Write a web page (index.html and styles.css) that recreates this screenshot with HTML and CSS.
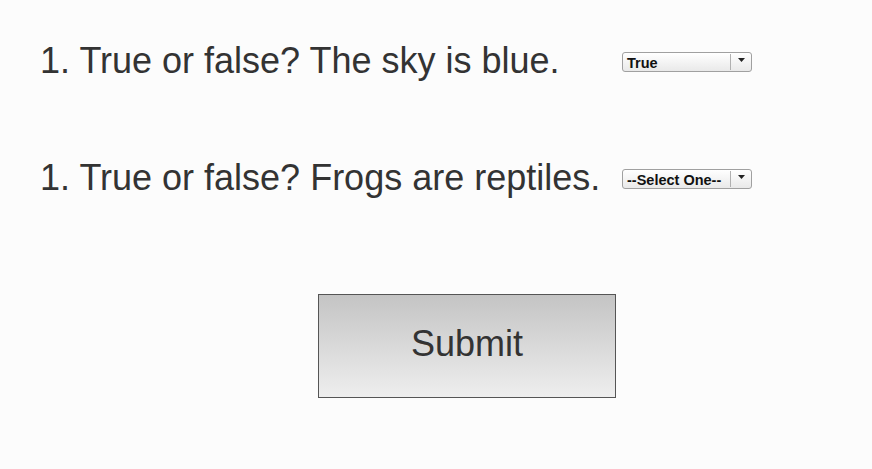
FILE: index.html
```html
<!DOCTYPE html>
<html>
<head>
<meta charset="utf-8">
<link rel="stylesheet" href="styles.css">
</head>
<body>
<div class="quiz">
  <div class="row">
    <div class="q">1. True or false? The sky is blue.</div>
    <div class="sel"><span class="val">True</span><span class="arr"><svg width="7" height="4" viewBox="0 0 7 4"><path d="M0 0H7L3.5 4Z" fill="#222"/></svg></span></div>
  </div>
  <div class="row">
    <div class="q">1. True or false? Frogs are reptiles.</div>
    <div class="sel"><span class="val">--Select One--</span><span class="arr"><svg width="7" height="4" viewBox="0 0 7 4"><path d="M0 0H7L3.5 4Z" fill="#222"/></svg></span></div>
  </div>
  <div class="actions">
    <button class="submit">Submit</button>
  </div>
</div>
</body>
</html>
```
FILE: styles.css
```css
html, body {
  margin: 0;
  padding: 0;
  background: #fcfcfc;
}
body {
  font-family: "Liberation Sans", Arial, sans-serif;
  color: #333;
  width: 872px;
  height: 469px;
  overflow: hidden;
}
.quiz {
  padding: 41px 0 0 40px;
  display: flex;
  flex-direction: column;
}
.row {
  display: flex;
  align-items: center;
  height: 40px;
  margin-bottom: 77px;
}
.row + .row {
  margin-bottom: 96px;
}
.q {
  width: 582px;
  font-size: 36px;
  line-height: 40px;
  white-space: nowrap;
}
.sel {
  width: 128px;
  height: 18px;
  border: 1px solid #a0a0a0;
  border-radius: 3px;
  background: linear-gradient(#ffffff, #e9e9e9);
  display: flex;
  align-items: center;
  box-sizing: content-box;
  margin-top: 1px;
}
.val {
  flex: 1;
  font-size: 14.5px;
  font-weight: bold;
  color: #111;
  padding-left: 4px;
  height: 14px;
  border-right: 1px solid #b0b0b0;
  display: flex;
  align-items: center;
  padding-top: 2px;
  white-space: nowrap;
}
.arr {
  width: 20px;
  display: flex;
  justify-content: center;
  align-items: center;
  height: 18px;
  padding-bottom: 4px;
  box-sizing: border-box;
}
.actions {
  padding-left: 278px;
}
.submit {
  width: 298px;
  height: 104px;
  border: 1px solid #555;
  background: linear-gradient(#c4c4c4, #eeeeee);
  font-family: "Liberation Sans", Arial, sans-serif;
  font-size: 36px;
  color: #333;
  padding: 0 0 4px 0;
  margin: 0;
}
```
